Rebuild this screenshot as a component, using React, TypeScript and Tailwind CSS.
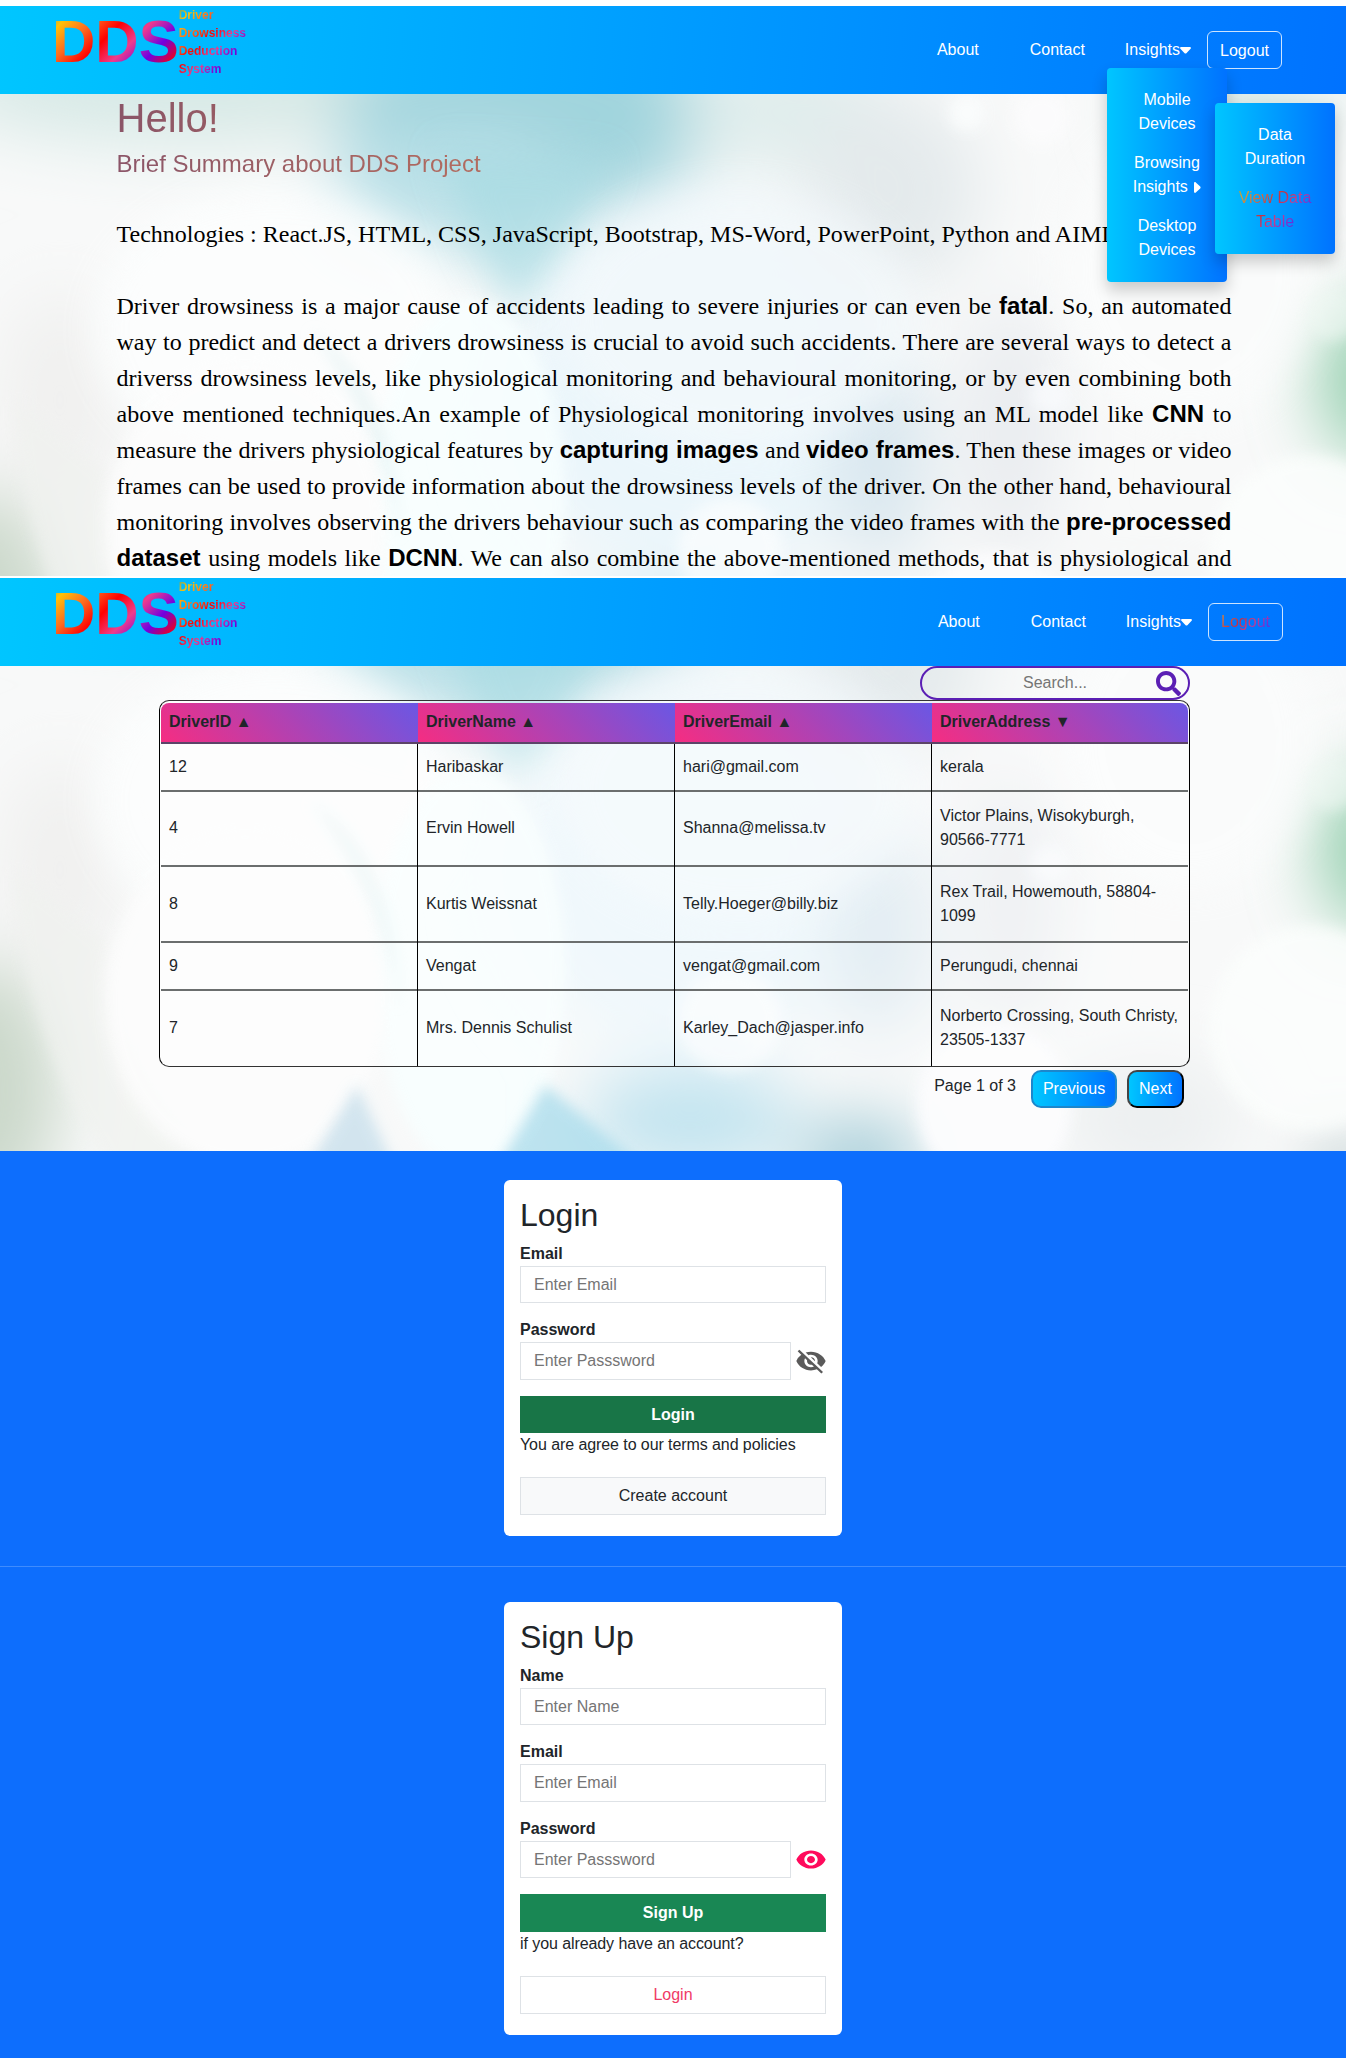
import React from "react";
import { FaSearch } from "react-icons/fa";
import { MdVisibility, MdVisibilityOff } from "react-icons/md";

const rainbow =
  "bg-[linear-gradient(135deg,#4ba58c_0%,#ffc107_13%,#fd6a20_28%,#ff0000_43%,#f03b8c_58%,#7000e0_74%,#ff0000_90%)] bg-clip-text text-transparent";
const hoverRainbow =
  "bg-[linear-gradient(135deg,#4ba58c_0%,#c9a040_13%,#d46a40_28%,#c83040_43%,#cc3c8c_58%,#6030e0_74%,#c03060_90%)] bg-clip-text text-transparent";

function Bokeh({ id, offset }: { id: string; offset: string }) {
  const soft = `url(#${id}-soft)`;
  const mid = `url(#${id}-mid)`;
  const wide = `url(#${id}-wide)`;
  return (
    <div className="absolute inset-0 -z-10 overflow-hidden bg-[#f8f9fa]">
      <svg className={offset} width="1346" height="600" viewBox="0 94 1346 600" aria-hidden="true">
        <defs>
          <filter id={`${id}-soft`} x="-50%" y="-50%" width="200%" height="200%">
            <feGaussianBlur stdDeviation="7" />
          </filter>
          <filter id={`${id}-mid`} x="-50%" y="-50%" width="200%" height="200%">
            <feGaussianBlur stdDeviation="18" />
          </filter>
          <filter id={`${id}-wide`} x="-50%" y="-50%" width="200%" height="200%">
            <feGaussianBlur stdDeviation="34" />
          </filter>
        </defs>
        <rect x="0" y="94" width="1346" height="600" fill="#f8f9f9" />
        <g filter={wide}>
          <ellipse cx="200" cy="85" rx="260" ry="60" fill="#d7e9e6" />
          <ellipse cx="530" cy="115" rx="190" ry="100" fill="#a0d4dd" />
          <ellipse cx="450" cy="190" rx="120" ry="60" fill="#bce1e8" />
          <ellipse cx="790" cy="110" rx="110" ry="60" fill="#dfedec" />
          <ellipse cx="890" cy="190" rx="90" ry="100" fill="#e4eaec" />
          <ellipse cx="1240" cy="105" rx="100" ry="50" fill="#d8e9e6" />
          <ellipse cx="690" cy="400" rx="190" ry="190" fill="#ebf6fb" />
          <ellipse cx="880" cy="460" rx="48" ry="110" fill="#d8e6ee" />
          <ellipse cx="1010" cy="430" rx="45" ry="130" fill="#e8ebef" />
          <ellipse cx="60" cy="400" rx="60" ry="110" fill="#f0f0ef" />
          <ellipse cx="-20" cy="620" rx="80" ry="130" fill="#cbd8ca" />
          <ellipse cx="1372" cy="380" rx="54" ry="80" fill="#97d0b0" />
          <ellipse cx="690" cy="650" rx="110" ry="50" fill="#c0e3ef" />
          <ellipse cx="860" cy="690" rx="60" ry="40" fill="#9cc8d4" />
          <ellipse cx="1350" cy="705" rx="36" ry="22" fill="#93acae" />
          <ellipse cx="1150" cy="650" rx="90" ry="60" fill="#eceff0" />
        </g>
        <ellipse cx="275" cy="330" rx="180" ry="140" fill="#fdfefe" opacity="0.85" filter={mid} />
        <path d="M440 150 L610 160 L560 260 L515 310 L480 260 Z" fill="#a5dae2" opacity="0.65" filter={mid} />
        <ellipse cx="740" cy="320" rx="180" ry="130" fill="#f4f9fc" opacity="0.7" filter={mid} />
        <ellipse cx="470" cy="500" rx="95" ry="200" fill="#f8ffff" opacity="0.85" filter={soft} />
        <path d="M310 330 Q400 390 398 540 Q380 420 310 330 Z" fill="#dceeef" opacity="0.5" filter={soft} />
        <path d="M15 400 Q20 560 110 700 L220 700 Q110 600 105 470 Z" fill="#f0f2ef" opacity="0.7" filter={soft} />
        <ellipse cx="245" cy="530" rx="140" ry="165" fill="#fdfdfd" opacity="0.85" filter={soft} />
        <path d="M357 615 L300 710 L400 710 Z" fill="#c9e0ec" opacity="0.8" filter={soft} />
        <path d="M545 615 L490 710 L660 710 Z" fill="#a4daeb" opacity="0.7" filter={soft} />
        <circle cx="730" cy="550" r="52" fill="#ffffff" opacity="0.6" filter={soft} />
        <ellipse cx="994" cy="635" rx="77" ry="82" fill="#fdfdfe" opacity="0.9" filter={soft} />
        <circle cx="1050" cy="395" r="20" fill="#fafcfe" opacity="0.7" filter={soft} />
        <circle cx="967" cy="113" r="18" fill="#fbfdfd" opacity="0.9" filter={soft} />
        <circle cx="1042" cy="118" r="28" fill="#fcfcfd" opacity="0.8" filter={soft} />
        <ellipse cx="1190" cy="270" rx="130" ry="150" fill="#fcfdfd" opacity="0.7" filter={mid} />
        <circle cx="1332" cy="315" r="26" fill="#eff8f3" opacity="0.6" filter={soft} />
        <ellipse cx="1310" cy="558" rx="100" ry="102" fill="#fcfefd" opacity="0.8" filter={soft} />
      </svg>
    </div>
  );
}

function Nav({ logoutHovered = false, children }: { logoutHovered?: boolean; children?: React.ReactNode }) {
  return (
    <nav className="relative z-10 flex h-[88px] items-start justify-between bg-[linear-gradient(96deg,#00c6ff,#0072ff)]">
      <div className="flex pl-[52px]">
        <div className={`text-[60px] font-bold leading-[72px] ${rainbow}`}>DDS</div>
        <div className={`h-[72px] text-[12px] font-bold leading-[18px] ${rainbow}`}>
          Driver
          <br />
          Drowsiness
          <br />
          Deduction
          <br />
          System
        </div>
      </div>
      <div className={`flex pt-[25px] leading-[37px] text-white ${logoutHovered ? "pr-[63px]" : "pr-16"}`}>
        <a className="mr-[51px]">About</a>
        <a className="mr-[40px]">Contact</a>
        <a className="mr-[16px] flex h-[37px] items-center">
          Insights
          <svg className="mt-px h-[7px] w-[11px]" viewBox="0 0 11 7" fill="currentColor" aria-hidden="true">
            <path d="M1.2 0h8.6c1 0 1.5 1.1.8 1.8L6.4 6.2c-.5.5-1.3.5-1.8 0L.4 1.8C-.3 1.1.2 0 1.2 0z" />
          </svg>
        </a>
        <a className="flex h-[38px] w-[75px] items-center justify-center rounded-[6px] border border-white/80">
          <span className={logoutHovered ? `-mx-3 px-3 leading-[36px] ${hoverRainbow}` : ""}>Logout</span>
        </a>
      </div>
      {children}
    </nav>
  );
}

const menu =
  "absolute w-[120px] rounded-[4px] bg-[linear-gradient(to_right,#00c6ff,#0072ff)] py-5 text-center leading-6 text-white shadow-[0_8px_16px_rgba(0,0,0,0.2)] flex flex-col gap-[15px]";

function Menus() {
  return (
    <>
      <div className={`${menu} left-[1107px] top-[62px]`}>
        <div>
          Mobile
          <br />
          Devices
        </div>
        <div>
          Browsing
          <br />
          Insights{" "}
          <svg className="ml-[2px] inline h-[11px] w-[7px] align-[-1px]" viewBox="0 0 7 11" fill="currentColor" aria-hidden="true">
            <path d="M0 1.2v8.6c0 1 1.1 1.5 1.8.8l4.4-4.2c.5-.5.5-1.3 0-1.8L1.8.4C1.1-.3 0 .2 0 1.2z" />
          </svg>
        </div>
        <div>
          Desktop
          <br />
          Devices
        </div>
      </div>
      <div className={`${menu} left-[1215px] top-[97px]`}>
        <div>
          Data
          <br />
          Duration
        </div>
        <div className={`mx-5 whitespace-nowrap ${hoverRainbow}`}>
          View Data
          <br />
          Table
        </div>
      </div>
    </>
  );
}

const B = ({ children }: { children: React.ReactNode }) => (
  <b className="font-['Liberation_Sans',sans-serif] font-bold">{children}</b>
);

const heads = ["DriverID ▲", "DriverName ▲", "DriverEmail ▲", "DriverAddress ▼"];
const rows = [
  ["12", "Haribaskar", "hari@gmail.com", "kerala"],
  ["4", "Ervin Howell", "Shanna@melissa.tv", "Victor Plains, Wisokyburgh, 90566-7771"],
  ["8", "Kurtis Weissnat", "Telly.Hoeger@billy.biz", "Rex Trail, Howemouth, 58804-1099"],
  ["9", "Vengat", "vengat@gmail.com", "Perungudi, chennai"],
  ["7", "Mrs. Dennis Schulist", "Karley_Dach@jasper.info", "Norberto Crossing, South Christy, 23505-1337"],
];

function Field({ label, hint, icon }: { label: string; hint: string; icon?: React.ReactNode }) {
  return (
    <div className="h-[76.7px]">
      <div className="h-[24px] font-bold leading-6">{label}</div>
      <div className="flex items-center justify-between">
        <div
          className={`h-[37.5px] border border-[#dee2e6] pl-[13px] leading-[35px] text-[#757575] ${icon ? "w-[271px]" : "w-full"}`}
        >
          {hint}
        </div>
        {icon}
      </div>
    </div>
  );
}

export default function App() {
  return (
    <div className="h-[2058px] w-[1346px] overflow-hidden bg-white pt-[6px] font-['Liberation_Sans',sans-serif] text-base text-[#212529]">
      <section className="relative isolate h-[572px]">
        <Nav>
          <Menus />
        </Nav>
        <div className="relative isolate h-[482px] px-[116.5px]">
          <Bokeh id="home" offset="" />
          <h1 className="bg-[linear-gradient(90deg,#8b5568,#a8645c_25%,#c87850)] bg-clip-text text-[40px] leading-[48px] text-transparent">
            Hello!
          </h1>
          <h4 className="mt-2 bg-[linear-gradient(90deg,#8b5568,#b06a60_30%,#d88850)] bg-clip-text text-[24px] leading-[28.8px] text-transparent">
            Brief Summary about DDS Project
          </h4>
          <p className="mt-[37.5px] whitespace-nowrap font-['Liberation_Serif',serif] text-[24px] leading-9 text-black">
            Technologies : React.JS, HTML, CSS, JavaScript, Bootstrap, MS-Word, PowerPoint, Python and AIML
          </p>
          <p className="mt-9 w-[1115px] text-justify font-['Liberation_Serif',serif] text-[24px] leading-9 text-black [text-align-last:justify]">
            Driver drowsiness is a major cause of accidents leading to severe injuries or can even be <B>fatal</B>. So,
            an automated way to predict and detect a drivers drowsiness is crucial to avoid such accidents. There are
            several ways to detect a driverss drowsiness levels, like physiological monitoring and behavioural
            monitoring, or by even combining both above mentioned techniques.An example of Physiological monitoring
            involves using an ML model like <B>CNN</B> to measure the drivers physiological features by{" "}
            <B>capturing images</B> and <B>video frames</B>. Then these images or video frames can be used to provide
            information about the drowsiness levels of the driver. On the other hand, behavioural monitoring involves
            observing the drivers behaviour such as comparing the video frames with the <B>pre-processed dataset</B>{" "}
            using models like <B>DCNN</B>. We can also combine the above-mentioned methods, that is physiological and
          </p>
        </div>
      </section>

      <section className="h-[573px]">
        <Nav logoutHovered />
        <div className="relative isolate h-[485px] pl-[159px]">
          <Bokeh id="table" offset="-mt-[102px]" />
          <div className="w-[1031px]">
            <div className="ml-auto flex h-[34px] w-[270px] items-center rounded-full border-2 border-[#5b1fb4] pl-[101px] text-[#757575]">
              <span>Search...</span>
              <FaSearch className="ml-auto mr-[7px] h-[25px] w-[25px] text-[#5b1fb4]" />
            </div>
            <div className="h-[367px] overflow-hidden rounded-[10px] border border-x-black border-y-[#333] bg-white/25 p-px pt-[2px]">
              <div className="grid h-[41px] grid-cols-[257px_257px_257px_1fr] overflow-hidden rounded-t-[8px] border-b-2 border-[#5c4468]">
                {heads.map((h) => (
                  <div
                    key={h}
                    className="bg-[linear-gradient(45deg,#f52d82,#6a57e4)] pl-2 text-base font-bold leading-[38px]"
                  >
                    {h}
                  </div>
                ))}
              </div>
              <div className="grid grid-rows-[48px_75px_76px_48px_74px]">
                {rows.map((r, i) => (
                  <div
                    key={r[0]}
                    className={`relative grid grid-cols-[257px_257px_257px_1fr] ${i < 4 ? "border-b-2 border-[#6b6e6e]" : ""}`}
                  >
                    {r.map((c, j) => (
                      <div
                        key={c}
                        className={`flex items-center pl-2 leading-6 ${j < 3 ? "-mb-[2px] border-r border-black pb-[3px]" : "pb-px"}`}
                      >
                        {c}
                      </div>
                    ))}
                  </div>
                ))}
              </div>
            </div>
            <div className="flex justify-end pr-[6px] pt-[3px]">
              <span className="mr-[15px] pt-1 leading-6">Page 1 of 3</span>
              <button className="mr-[10px] h-[38px] w-[86px] rounded-[10px] border-2 border-[#1c87cc] bg-[linear-gradient(to_right,#00c6ff,#0072ff)] text-white">
                Previous
              </button>
              <button className="h-[38px] w-[57px] rounded-[10px] border-2 border-b-black border-l-[#444] border-r-black border-t-[#444] bg-[linear-gradient(to_right,#00c6ff,#0072ff)] text-white">
                Next
              </button>
            </div>
          </div>
        </div>
      </section>

      <section className="flex h-[416px] justify-center border-b border-[#3f8cfd] bg-[#0d6efd] pt-[29px]">
        <div className="h-[356px] w-[338px] rounded-[6px] bg-white p-4">
          <h2 className="mb-[7.6px] text-[32px] leading-[38px]">Login</h2>
          <Field label="Email" hint="Enter Email" />
          <Field
            label="Password"
            hint="Enter Passsword"
            icon={<MdVisibilityOff className="-mr-px h-[30px] w-[32px] text-[#5a5a5a]" preserveAspectRatio="none" />}
          />
          <div className="mt-[1px] h-[37.5px] bg-[#187547] text-center font-bold leading-[37px] text-white">Login</div>
          <p className="leading-6 tracking-[-0.08px]">You are agree to our terms and policies</p>
          <div className="mt-[20px] h-[37.5px] border border-[#dee2e6] bg-[#f8f9fa] text-center leading-[35px]">
            Create account
          </div>
        </div>
      </section>

      <section className="flex h-[491px] justify-center bg-[#0d6efd] pt-[35px]">
        <div className="h-[432.5px] w-[338px] rounded-[6px] bg-white p-4">
          <h2 className="mb-[7.6px] text-[32px] leading-[38px]">Sign Up</h2>
          <Field label="Name" hint="Enter Name" />
          <Field label="Email" hint="Enter Email" />
          <Field
            label="Password"
            hint="Enter Passsword"
            icon={<MdVisibility className="-mr-px h-[29px] w-[32px] text-[#ff0a5c]" preserveAspectRatio="none" />}
          />
          <div className="mt-[0.5px] h-[37.5px] bg-[#198754] text-center font-bold leading-[37px] text-white">
            Sign Up
          </div>
          <p className="leading-6 tracking-[-0.08px]">if you already have an account?</p>
          <div className="mt-[20px] h-[38px] border border-[#dee2e6] text-center leading-[36px] text-[#f03a66]">
            Login
          </div>
        </div>
      </section>
    </div>
  );
}
